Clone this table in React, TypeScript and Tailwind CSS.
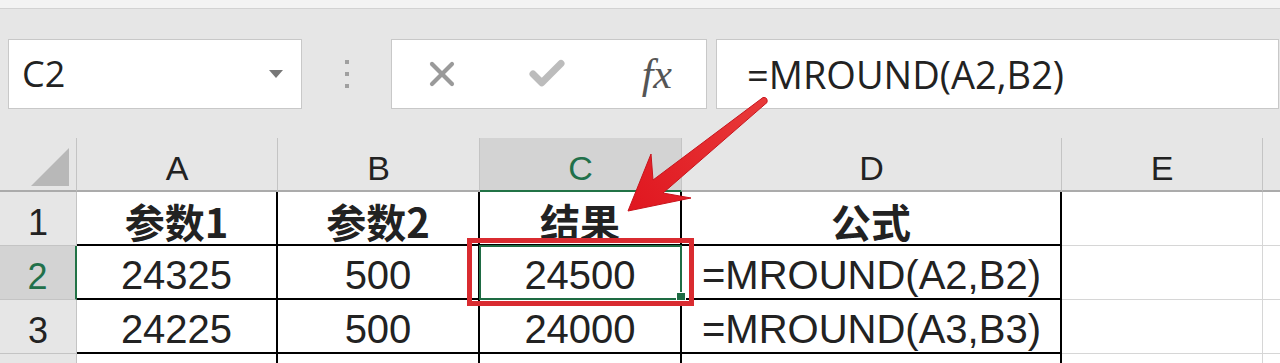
import { X, Check } from 'lucide-react';

const sans = '"Liberation Sans", "Noto Sans CJK SC", sans-serif';
const ui = '"Open Sans", "Noto Sans CJK SC", sans-serif';

const cols = ['A', 'B', 'C', 'D', 'E'];

const rows = [
  { n: 1, cells: ['参数1', '参数2', '结果', '公式'], bold: true },
  { n: 2, cells: ['24325', '500', '24500', '=MROUND(A2,B2)'] },
  { n: 3, cells: ['24225', '500', '24000', '=MROUND(A3,B3)'] },
];

function FormulaBar() {
  return (
    <div className="flex items-stretch h-[70px] mt-[30px] pl-[8px]">
      {/* name box */}
      <div className="w-[294px] bg-white border border-[#c8c8c8] flex items-center justify-between pl-[13px] pr-[18px]">
        <span className="text-[36px] text-[#222] leading-none" style={{ fontFamily: ui }}>
          C2
        </span>
        <svg width="14" height="8" viewBox="0 0 14 8">
          <path d="M0 0 L14 0 L7 8 Z" fill="#777" />
        </svg>
      </div>

      {/* grip dots */}
      <div className="w-[89px] flex flex-col items-center justify-center gap-[8px]">
        <span className="w-[4px] h-[4px] bg-[#a0a0a0]" />
        <span className="w-[4px] h-[4px] bg-[#a0a0a0]" />
        <span className="w-[4px] h-[4px] bg-[#a0a0a0]" />
      </div>

      {/* cancel / enter / fx */}
      <div className="w-[316px] bg-white border border-[#c8c8c8] flex items-center">
        <X size={40} strokeWidth={2.5} className="text-[#9a9a9a] ml-[30px]" />
        <Check size={42} strokeWidth={4} className="text-[#bcbcbc] ml-[64px]" />
        <span
          className="ml-auto mr-[34px] text-[42px] italic text-[#555] leading-none font-serif"
          style={{ fontFamily: '"Liberation Serif", "DejaVu Serif", serif' }}
        >
          fx
        </span>
      </div>

      {/* formula input */}
      <div className="flex-1 ml-[9px] mr-[1px] bg-white border border-[#c8c8c8] flex items-center pl-[30px]">
        <span className="text-[38px] text-[#222] leading-none" style={{ fontFamily: ui }}>
          =MROUND(A2,B2)
        </span>
      </div>
    </div>
  );
}

function Grid() {
  return (
    <div
      className="grid grid-cols-[77px_201px_202px_202px_380px_201px_1fr] grid-rows-[54px_54px_54px_54px_9px] mt-[29px] text-[#222]"
      style={{ fontFamily: sans }}
    >
      {/* column header row */}
      <div className="border-r border-b-2 border-r-[#c4c4c4] border-b-[#ababab] flex items-center justify-end pr-[7px] pt-[6px]">
        <svg width="38" height="38" viewBox="0 0 38 38">
          <path d="M38 0 L38 38 L0 38 Z" fill="#b8b8b8" />
        </svg>
      </div>
      {cols.map((c) => (
        <div
          key={c}
          className={`border-r border-r-[#c4c4c4] border-b-2 flex items-end justify-center pb-[5px] text-[34px] leading-none ${
            c === 'C' ? 'bg-[#d3d3d3] border-b-[#217346] text-[#21704a]' : 'border-b-[#ababab]'
          }`}
        >
          {c}
        </div>
      ))}
      <div className="border-b-2 border-b-[#ababab]" />

      {/* body rows */}
      {rows.map((r) => (
        <Row key={r.n} n={r.n} cells={r.cells} bold={r.bold} />
      ))}

      {/* partial row 4 */}
      <div className="border-r border-r-[#c4c4c4]" />
      <div className="bg-white border-r-2 border-black" />
      <div className="bg-white border-r-2 border-black" />
      <div className="bg-white border-r-2 border-black" />
      <div className="bg-white border-r-2 border-black" />
      <div className="bg-white border-r border-[#d6d6d6]" />
      <div className="bg-white" />
    </div>
  );
}

function Row({ n, cells, bold }: { n: number; cells: string[]; bold?: boolean }) {
  const sel = n === 2;
  return (
    <>
      <div
        className={`flex items-center justify-center pt-[8px] text-[36px] leading-none ${
          sel
            ? 'bg-[#d3d3d3] border-r-2 border-r-[#217346] text-[#21704a] border-b border-b-[#c4c4c4]'
            : 'border-r border-b border-[#c4c4c4]'
        }`}
      >
        {n}
      </div>
      {cells.map((v, i) => (
        <div
          key={i}
          className={`relative bg-white border-r-2 border-b-2 border-black flex items-center pt-[6px] leading-none text-[40px] ${
            bold ? 'font-bold' : ''
          } ${i === 3 && !bold ? 'justify-start pl-[20px]' : 'justify-center'}`}
          style={bold ? { fontFamily: '"Noto Sans CJK SC", "Liberation Sans", sans-serif' } : undefined}
        >
          {v}
          {sel && i === 2 && (
            <div className="absolute -left-[1px] -top-[1px] right-[-2px] bottom-[-2px] border-2 border-[#1e6b43]" />
          )}
        </div>
      ))}
      <div className="bg-white border-r border-b border-[#d6d6d6]" />
      <div className="bg-white border-b border-[#d6d6d6]" />
    </>
  );
}

export default function App() {
  return (
    <div className="relative w-[1280px] h-[363px] overflow-hidden bg-[#e6e6e6]">
      <div className="h-[9px] bg-[#f3f3f3] border-b border-[#d2d2d2]" />
      <FormulaBar />
      <Grid />

      {/* red highlight box around C2, with the fill handle inside */}
      <div className="absolute left-[467px] top-[238px] w-[227px] h-[68px] border-[5px] border-[#d92b30]">
        <span className="absolute right-[3px] bottom-[0px] w-[10px] h-[9px] bg-[#1e6b43] border border-white" />
      </div>

      {/* red arrow */}
      <svg className="absolute inset-0 pointer-events-none" width="1280" height="363" viewBox="0 0 1280 363">
        <defs>
          <linearGradient id="ar" x1="765" y1="100" x2="628" y2="210" gradientUnits="userSpaceOnUse">
            <stop offset="0" stopColor="#e83a3a" />
            <stop offset="1" stopColor="#e0161f" />
          </linearGradient>
        </defs>
        <path
          d="M628 211 L651 154 L653 180 L763 97.5 Q768 97 767 102.5 L663 193 L691 198 Z"
          fill="url(#ar)"
          stroke="#c8141c"
          strokeWidth="1"
          strokeLinejoin="round"
        />
      </svg>
    </div>
  );
}
